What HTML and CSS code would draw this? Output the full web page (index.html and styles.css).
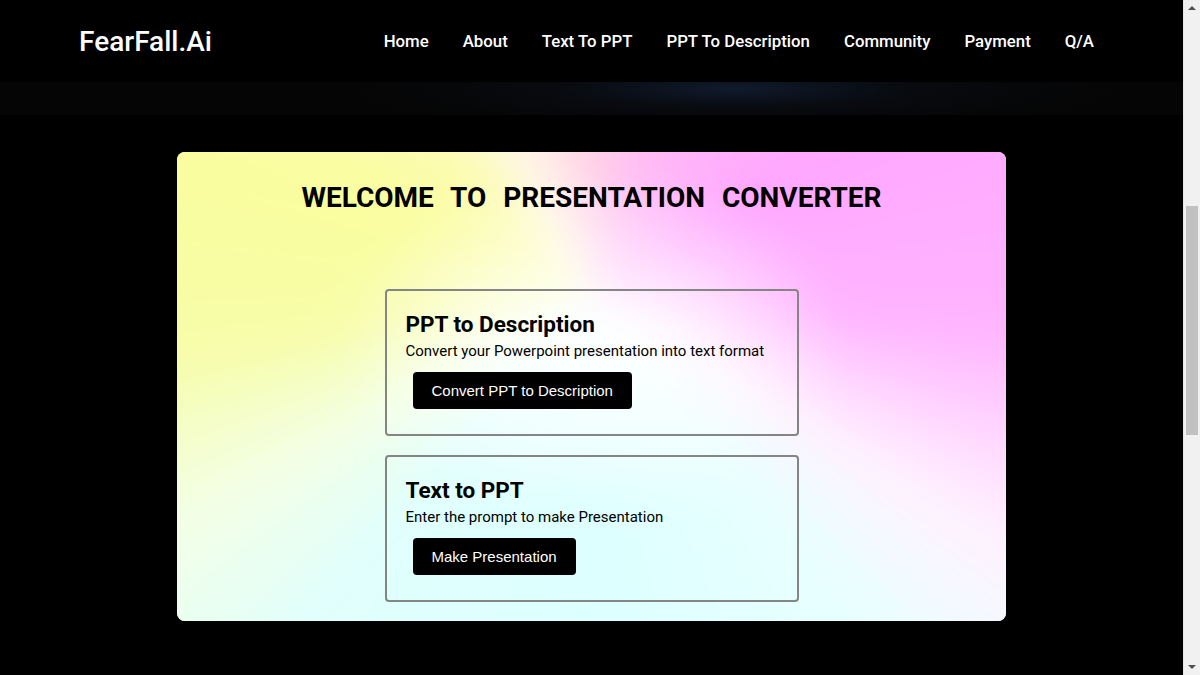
FILE: index.html
```html
<!DOCTYPE html>
<html lang="en">
<head>
<meta charset="utf-8">
<title>FearFall.Ai</title>
<link rel="stylesheet" href="styles.css">
</head>
<body>
<header class="nav">
  <div class="logo">FearFall.Ai</div>
  <nav class="links">
    <a href="#">Home</a>
    <a href="#">About</a>
    <a href="#">Text To PPT</a>
    <a href="#">PPT To Description</a>
    <a href="#">Community</a>
    <a href="#">Payment</a>
    <a href="#">Q/A</a>
  </nav>
</header>
<div class="glow-band"></div>
<main class="main">
  <section class="card">
    <h1 class="title">WELCOME TO PRESENTATION CONVERTER</h1>
    <div class="options">
      <div class="option">
        <h2 class="option-title">PPT to Description</h2>
        <p class="option-text">Convert your Powerpoint presentation into text format</p>
        <button class="btn">Convert PPT to Description</button>
      </div>
      <div class="option">
        <h2 class="option-title">Text to PPT</h2>
        <p class="option-text">Enter the prompt to make Presentation</p>
        <button class="btn">Make Presentation</button>
      </div>
    </div>
  </section>
</main>
<div class="scrollbar" aria-hidden="true">
  <span class="sb-arrow sb-up"></span>
  <div class="sb-track"><span class="sb-thumb"></span></div>
  <span class="sb-arrow sb-down"></span>
</div>
</body>
</html>
```
FILE: styles.css
```css
html {
  background: #000;
}
body {
  margin: 0 17px 0 0;
  background: #000;
  font-family: Roboto, "Liberation Sans", sans-serif;
  color: #000;
  overflow: hidden;
}
.nav {
  height: 82px;
  display: flex;
  align-items: center;
  justify-content: space-between;
  padding: 0 89px 0 79px;
}
.logo {
  color: #fff;
  font-size: 28px;
  font-weight: 500;
}
.links {
  display: flex;
  gap: 34px;
}
.links a {
  color: #fff;
  text-decoration: none;
  font-size: 16.8px;
  font-weight: 500;
}
.glow-band {
  height: 33px;
  background: radial-gradient(ellipse 32% 130% at 62% 20%, rgba(18, 32, 54, 0.8) 0%, rgba(10, 14, 22, 0.6) 45%, rgba(5, 5, 5, 0.6) 100%), #050505;
}
.main {
  padding-top: 37px;
  display: flex;
  justify-content: center;
  height: 560px;
}
.card {
  position: relative;
  isolation: isolate;
  overflow: hidden;
  width: 829px;
  height: 469px;
  box-sizing: border-box;
  border-radius: 8px;
  padding: 30px 0 19px;
  display: flex;
  flex-direction: column;
  align-items: center;
  background: #fff;
}
.card::before {
  content: "";
  position: absolute;
  inset: -40px;
  z-index: -1;
  filter: blur(18px);
  background:
    radial-gradient(ellipse 28% 32% at 50% 42%, rgba(255,255,255,1) 0%, rgba(255,255,255,0.65) 45%, rgba(255,255,255,0) 100%),
    conic-gradient(from 0deg at 50% 33%,
      #ffd0e6 0deg, #ffbcf4 20deg, #ffa6ff 60deg, #ffb4ff 95deg,
      #fff2ff 121deg, #e8ffff 140deg, #dcffff 180deg, #e0fffd 220deg,
      #f3ffe6 241deg, #f7fda8 262deg, #fafd9e 290deg, #fcfcb2 316deg,
      #fff8ea 333deg, #ffe4e6 347deg, #ffd0e6 360deg);
}
.title {
  margin: 0;
  font-size: 28px;
  font-weight: 700;
  word-spacing: 10px;
  line-height: 32px;
}
.options {
  margin-top: auto;
  display: flex;
  flex-direction: column;
  gap: 19px;
}
.option {
  width: 414px;
  height: 147px;
  box-sizing: border-box;
  border: 2px solid #858585;
  border-radius: 4px;
  padding: 20px 19px 0;
}
.option-title {
  margin: 0;
  font-size: 22.5px;
  font-weight: 700;
  line-height: 26px;
}
.option-text {
  margin: 5px 0 0;
  font-size: 15px;
  line-height: 18px;
}
.btn {
  display: block;
  margin: 12px 0 0 7px;
  height: 37px;
  padding: 0 19px;
  background: #000;
  color: #fff;
  border: none;
  border-radius: 4px;
  font-family: "Liberation Sans", Arial, sans-serif;
  font-size: 15px;
}
.scrollbar {
  position: fixed;
  top: 0;
  right: 0;
  width: 17px;
  height: 100%;
  background: #f1f1f1;
  border-left: 1px solid #e6e6e6;
  box-sizing: border-box;
  display: flex;
  flex-direction: column;
  align-items: center;
}
.sb-arrow {
  width: 0;
  height: 0;
}
.sb-up {
  margin: 6px 0 5px;
  border-left: 4px solid transparent;
  border-right: 4px solid transparent;
  border-bottom: 4px solid #505050;
}
.sb-down {
  margin: 5px 0 6px;
  border-left: 4px solid transparent;
  border-right: 4px solid transparent;
  border-top: 4px solid #505050;
}
.sb-track {
  flex: 1;
  width: 100%;
  padding-top: 191px;
  box-sizing: border-box;
  display: flex;
  justify-content: center;
}
.sb-thumb {
  width: 12px;
  height: 229px;
  background: #c1c1c1;
}
```
